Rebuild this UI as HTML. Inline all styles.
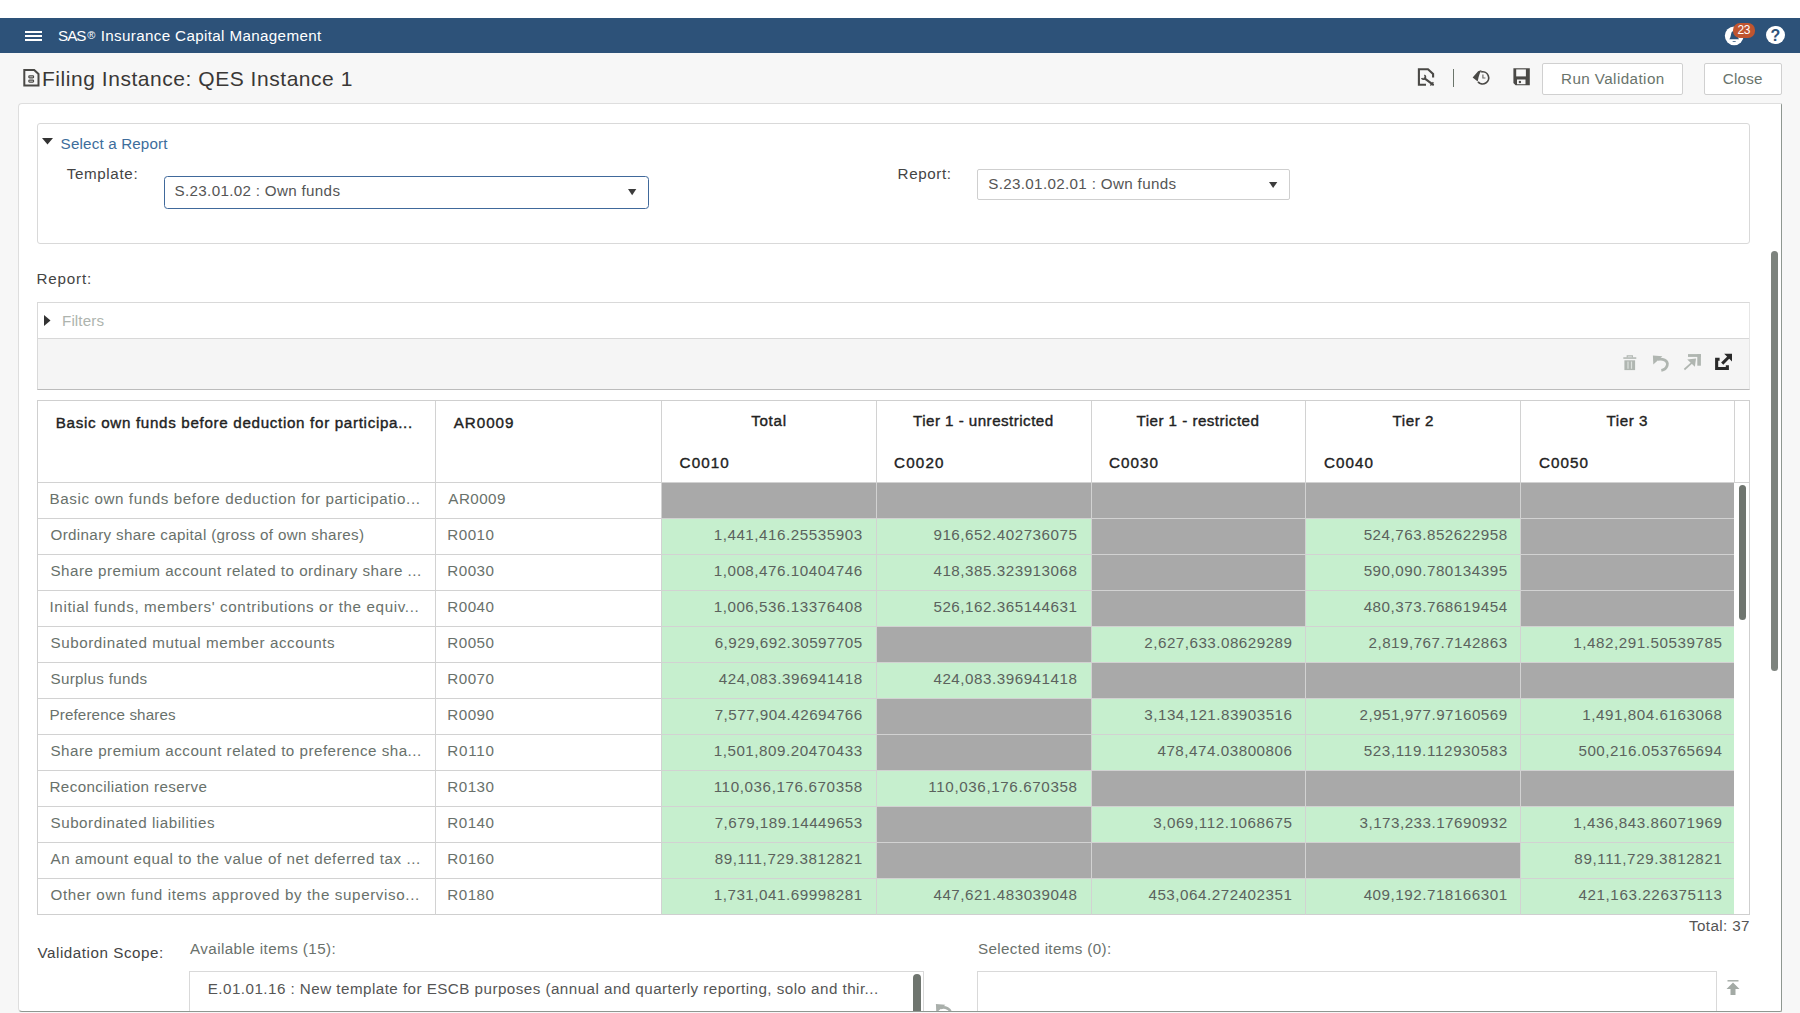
<!DOCTYPE html>
<html lang="en">
<head>
<meta charset="utf-8">
<title>SAS Insurance Capital Management - Filing Instance: QES Instance 1</title>
<style>
*{box-sizing:border-box;margin:0;padding:0}
html,body{width:1800px;height:1013px;overflow:hidden;background:#fff;font-family:"Liberation Sans",sans-serif}
#app{position:relative;width:1800px;height:1013px;overflow:hidden;background:#f7f7f7}
.abs{position:absolute}
.t{position:absolute;white-space:nowrap;line-height:1;display:block}
#topstrip{left:0;top:0;width:1800px;height:18px;background:#fff}
#banner{left:0;top:18px;width:1800px;height:35.4px;background:#2d5279}
#panel{left:18px;top:103px;width:1764px;height:909px;background:#fff;border:1px solid #dedede;border-right-color:#8f9791;border-bottom-color:#8f9791;border-radius:4px 2px 2px 4px}
.box{position:absolute;background:#fff;border:1px solid #d9d9d9}
.btn{position:absolute;background:#fff;border:1px solid #d0d0d0;border-radius:2px}
.gr{position:absolute;background:#a9a9a9}
.gn{position:absolute;background:#c6efce}
.vl{position:absolute;width:1px;background:#d2d2d2}
.hl{position:absolute;height:1px;background:#d2d2d2}
svg{position:absolute;overflow:visible}
</style>
</head>
<body>
<div id="app">
<div id="topstrip" class="abs"></div>
<div id="banner" class="abs"></div>
<!-- hamburger -->
<div class="abs" style="left:25.3px;top:30.6px;width:16.4px;height:2.1px;background:#fff"></div>
<div class="abs" style="left:25.3px;top:35px;width:16.4px;height:2.1px;background:#fff"></div>
<div class="abs" style="left:25.3px;top:39.4px;width:16.4px;height:2.1px;background:#fff"></div>
<!-- bell + badge -->
<svg style="left:1724px;top:26px" width="20" height="20" viewBox="0 0 20 20"><circle cx="10.2" cy="9.8" r="9.4" fill="#fff"/><path d="M5.2 13.2 C7.2 11.5 6.6 7.5 8 5.8 C9 4.6 11.4 4.6 12.4 5.8 C13.8 7.5 13.2 11.5 15.2 13.2 Z" fill="#2d5279"/><path d="M8.2 15.2 Q10.2 17 12.2 15.2 Z" fill="#2d5279"/></svg>
<div class="abs" style="left:1733.2px;top:23px;width:21.8px;height:14.9px;border-radius:7px;background:#bf5530"></div>
<span class="t" style="left:1737.6px;top:23.9px;font-size:12px;color:#fff;letter-spacing:-0.4px">23</span>
<!-- help -->
<div class="abs" style="left:1765.9px;top:25.6px;width:18.8px;height:18.8px;border-radius:50%;background:#fff"></div>
<span class="t" style="left:1770.4px;top:27.5px;font-size:16px;font-weight:700;color:#2d5279">?</span>

<!-- title bar icons -->
<svg style="left:23px;top:69px" width="17" height="18" viewBox="0 0 17 18"><path d="M1.3 1 H11.2 L15.5 5 V16.5 H1.3 Z" fill="none" stroke="#4a4946" stroke-width="2" stroke-linejoin="miter"/><rect x="5.8" y="6.9" width="4.8" height="1.9" rx=".8" fill="none" stroke="#4a4946" stroke-width="1.2"/><rect x="5.8" y="11.2" width="4.8" height="1.9" rx=".8" fill="none" stroke="#4a4946" stroke-width="1.2"/></svg>
<svg style="left:1417px;top:68px" width="18" height="18" viewBox="0 0 18 18"><path d="M9 16.8 H1.9 V1.2 H11 L16.1 6 V9.6" fill="none" stroke="#4a4946" stroke-width="2.1"/><path d="M7.6 10.4 L16 16.6" stroke="#4a4946" stroke-width="2.2" stroke-linecap="round"/><path d="M4.6 10.2 A2.1 2.1 0 1 0 7.3 7.2" fill="none" stroke="#4a4946" stroke-width="1.6"/><path d="M13.4 17.4 L16.4 14.2" stroke="#4a4946" stroke-width="1.4"/></svg>
<div class="abs" style="left:1453.2px;top:69.2px;width:1.3px;height:17.8px;background:#6b756b"></div>
<svg style="left:1472px;top:69px" width="18" height="17" viewBox="0 0 18 17"><path d="M9.2 2.9 A6.1 6.1 0 1 1 6.0 12.9" fill="none" stroke="#4a4946" stroke-width="1.7"/><path d="M9.6 1 L6.1 2.3 L0.65 8.55 L5.7 12.4 L6.5 8.55 L7.65 4.7 Z" fill="#4a4946"/><path d="M10.9 5.6 V9 H13.4" fill="none" stroke="#6f6e6b" stroke-width="1.2"/></svg>
<svg style="left:1513px;top:68px" width="17" height="18" viewBox="0 0 17 18"><path d="M0.4 0.2 H16.8 V17.3 H2.6 L0.4 15 Z" fill="#4a4946"/><rect x="3.2" y="1.4" width="9.7" height="7" fill="#f7f7f7"/><rect x="4" y="11.5" width="8.5" height="4.7" fill="#f7f7f7"/><circle cx="6.9" cy="14" r="1.2" fill="#4a4946"/></svg>
<div class="btn" style="left:1542px;top:63px;width:141px;height:31.5px"></div>
<div class="btn" style="left:1704px;top:63px;width:78px;height:31.5px"></div>

<div id="panel" class="abs"></div>
<!-- outer scrollbar -->
<div class="abs" style="left:1771px;top:251px;width:7px;height:420px;border-radius:4px;background:#7d837e"></div>

<!-- select a report box -->
<div class="box" style="left:37px;top:123px;width:1713px;height:121px;border-radius:3px"></div>
<svg style="left:42px;top:138px" width="12" height="7" viewBox="0 0 12 7"><path d="M0 0 H11 L5.5 6.5 Z" fill="#333"/></svg>
<div class="abs" style="left:164px;top:176px;width:485px;height:32.7px;border:1.5px solid #40699b;border-radius:3.5px;background:#fff"></div>
<svg style="left:628px;top:188.9px" width="9" height="7" viewBox="0 0 9 7"><path d="M0 0 H8.3 L4.15 6.2 Z" fill="#3c3c3c"/></svg>
<div class="abs" style="left:977px;top:169px;width:313px;height:31px;border:1px solid #cfcfcf;border-radius:2px;background:#fff"></div>
<svg style="left:1268.9px;top:181.7px" width="9" height="7" viewBox="0 0 9 7"><path d="M0 0 H8.3 L4.15 6 Z" fill="#3c3c3c"/></svg>

<!-- filters + toolbar -->
<div class="box" style="left:37px;top:302px;width:1713px;height:88px;background:#f5f5f5;border-color:#d9d9d9 #e6e6e6 #bcbcbc #d9d9d9"></div>
<div class="abs" style="left:38px;top:303px;width:1711px;height:36px;background:#fff;border-bottom:1px solid #d8d8d8"></div>
<svg style="left:44px;top:315px" width="7" height="11" viewBox="0 0 7 11"><path d="M0 0 L6.5 5.5 L0 11 Z" fill="#333"/></svg>
<!-- toolbar icons -->
<svg style="left:1620px;top:350px" width="120" height="25" viewBox="0 0 120 25">
<g fill="#b0b6b1" stroke="none">
<path d="M7.2 7.5 V5.9 H12.4 V7.5" fill="none" stroke="#b0b6b1" stroke-width="1.1"/>
<rect x="3.3" y="7.3" width="13" height="1.5"/>
<rect x="4.4" y="10.3" width="10.7" height="9.8"/>
<path d="M8 11.6 V18.8 M11.5 11.6 V18.8" stroke="#dde2de" stroke-width="1.2" fill="none"/>
<path d="M32.9 5.6 L42.4 6.3 L33.3 14.5 Z"/>
<path d="M37.5 9.6 C42 8 48.6 10.5 47.2 15.5 C46.2 18.6 44 19.9 41.3 20.3" fill="none" stroke="#b0b6b1" stroke-width="2.7"/>
<rect x="68" y="4.1" width="12.9" height="2.8"/>
<rect x="77.3" y="4.1" width="3.6" height="11.6"/>
<path d="M76 8.4 L67.2 9.6 L74.9 16.8 Z"/>
<path d="M72 12.6 L64.4 19.5" stroke="#b0b6b1" stroke-width="1.7" fill="none"/>
</g>
<g fill="#2a2a2a">
<path d="M99.6 9.25 H96.65 V18.55 H107.35 V15.2" fill="none" stroke="#2a2a2a" stroke-width="3.1"/>
<path d="M104.2 3.8 H112 V11.4 Z"/>
<path d="M109.6 6.2 L102.2 13.6" stroke="#2a2a2a" stroke-width="3" fill="none"/>
</g>
</svg>

<!-- table -->
<div class="box" style="left:37px;top:400px;width:1713px;height:515px;border-color:#cfcfcf"></div>
<div class="gr" style="left:662px;top:483px;width:214px;height:35px"></div>
<div class="gr" style="left:877px;top:483px;width:214px;height:35px"></div>
<div class="gr" style="left:1092px;top:483px;width:213px;height:35px"></div>
<div class="gr" style="left:1306px;top:483px;width:214px;height:35px"></div>
<div class="gr" style="left:1521px;top:483px;width:213px;height:35px"></div>
<div class="gn" style="left:662px;top:519px;width:214px;height:35px"></div>
<div class="gn" style="left:877px;top:519px;width:214px;height:35px"></div>
<div class="gr" style="left:1092px;top:519px;width:213px;height:35px"></div>
<div class="gn" style="left:1306px;top:519px;width:214px;height:35px"></div>
<div class="gr" style="left:1521px;top:519px;width:213px;height:35px"></div>
<div class="gn" style="left:662px;top:555px;width:214px;height:35px"></div>
<div class="gn" style="left:877px;top:555px;width:214px;height:35px"></div>
<div class="gr" style="left:1092px;top:555px;width:213px;height:35px"></div>
<div class="gn" style="left:1306px;top:555px;width:214px;height:35px"></div>
<div class="gr" style="left:1521px;top:555px;width:213px;height:35px"></div>
<div class="gn" style="left:662px;top:591px;width:214px;height:35px"></div>
<div class="gn" style="left:877px;top:591px;width:214px;height:35px"></div>
<div class="gr" style="left:1092px;top:591px;width:213px;height:35px"></div>
<div class="gn" style="left:1306px;top:591px;width:214px;height:35px"></div>
<div class="gr" style="left:1521px;top:591px;width:213px;height:35px"></div>
<div class="gn" style="left:662px;top:627px;width:214px;height:35px"></div>
<div class="gr" style="left:877px;top:627px;width:214px;height:35px"></div>
<div class="gn" style="left:1092px;top:627px;width:213px;height:35px"></div>
<div class="gn" style="left:1306px;top:627px;width:214px;height:35px"></div>
<div class="gn" style="left:1521px;top:627px;width:213px;height:35px"></div>
<div class="gn" style="left:662px;top:663px;width:214px;height:35px"></div>
<div class="gn" style="left:877px;top:663px;width:214px;height:35px"></div>
<div class="gr" style="left:1092px;top:663px;width:213px;height:35px"></div>
<div class="gr" style="left:1306px;top:663px;width:214px;height:35px"></div>
<div class="gr" style="left:1521px;top:663px;width:213px;height:35px"></div>
<div class="gn" style="left:662px;top:699px;width:214px;height:35px"></div>
<div class="gr" style="left:877px;top:699px;width:214px;height:35px"></div>
<div class="gn" style="left:1092px;top:699px;width:213px;height:35px"></div>
<div class="gn" style="left:1306px;top:699px;width:214px;height:35px"></div>
<div class="gn" style="left:1521px;top:699px;width:213px;height:35px"></div>
<div class="gn" style="left:662px;top:735px;width:214px;height:35px"></div>
<div class="gr" style="left:877px;top:735px;width:214px;height:35px"></div>
<div class="gn" style="left:1092px;top:735px;width:213px;height:35px"></div>
<div class="gn" style="left:1306px;top:735px;width:214px;height:35px"></div>
<div class="gn" style="left:1521px;top:735px;width:213px;height:35px"></div>
<div class="gn" style="left:662px;top:771px;width:214px;height:35px"></div>
<div class="gn" style="left:877px;top:771px;width:214px;height:35px"></div>
<div class="gr" style="left:1092px;top:771px;width:213px;height:35px"></div>
<div class="gr" style="left:1306px;top:771px;width:214px;height:35px"></div>
<div class="gr" style="left:1521px;top:771px;width:213px;height:35px"></div>
<div class="gn" style="left:662px;top:807px;width:214px;height:35px"></div>
<div class="gr" style="left:877px;top:807px;width:214px;height:35px"></div>
<div class="gn" style="left:1092px;top:807px;width:213px;height:35px"></div>
<div class="gn" style="left:1306px;top:807px;width:214px;height:35px"></div>
<div class="gn" style="left:1521px;top:807px;width:213px;height:35px"></div>
<div class="gn" style="left:662px;top:843px;width:214px;height:35px"></div>
<div class="gr" style="left:877px;top:843px;width:214px;height:35px"></div>
<div class="gr" style="left:1092px;top:843px;width:213px;height:35px"></div>
<div class="gr" style="left:1306px;top:843px;width:214px;height:35px"></div>
<div class="gn" style="left:1521px;top:843px;width:213px;height:35px"></div>
<div class="gn" style="left:662px;top:879px;width:214px;height:35px"></div>
<div class="gn" style="left:877px;top:879px;width:214px;height:35px"></div>
<div class="gn" style="left:1092px;top:879px;width:213px;height:35px"></div>
<div class="gn" style="left:1306px;top:879px;width:214px;height:35px"></div>
<div class="gn" style="left:1521px;top:879px;width:213px;height:35px"></div>
<div class="vl" style="left:435px;top:401px;height:514px"></div>
<div class="vl" style="left:661px;top:401px;height:514px"></div>
<div class="vl" style="left:876px;top:401px;height:514px"></div>
<div class="vl" style="left:1091px;top:401px;height:514px"></div>
<div class="vl" style="left:1305px;top:401px;height:514px"></div>
<div class="vl" style="left:1520px;top:401px;height:514px"></div>
<div class="vl" style="left:1734px;top:401px;height:81px"></div>
<div class="hl" style="left:38px;top:482px;width:1711px"></div>
<div class="hl" style="left:38px;top:518px;width:1696px"></div>
<div class="hl" style="left:38px;top:554px;width:1696px"></div>
<div class="hl" style="left:38px;top:590px;width:1696px"></div>
<div class="hl" style="left:38px;top:626px;width:1696px"></div>
<div class="hl" style="left:38px;top:662px;width:1696px"></div>
<div class="hl" style="left:38px;top:698px;width:1696px"></div>
<div class="hl" style="left:38px;top:734px;width:1696px"></div>
<div class="hl" style="left:38px;top:770px;width:1696px"></div>
<div class="hl" style="left:38px;top:806px;width:1696px"></div>
<div class="hl" style="left:38px;top:842px;width:1696px"></div>
<div class="hl" style="left:38px;top:878px;width:1696px"></div>
<!-- inner table scrollbar -->
<div class="abs" style="left:1739px;top:485px;width:7px;height:135px;border-radius:4px;background:#6f756f"></div>

<!-- bottom lists -->
<div class="box" style="left:189px;top:971px;width:735px;height:40px;border-bottom:0"></div>
<div class="abs" style="left:913px;top:974px;width:7.5px;height:37px;border-radius:4px 4px 0 0;background:#6f756f"></div>
<div class="box" style="left:977px;top:971px;width:740px;height:40px;border-bottom:0"></div>
<svg style="left:1726px;top:980px" width="14" height="15" viewBox="0 0 14 15"><path d="M1.5 0.8 H12.5" stroke="#a3aaa5" stroke-width="1.4"/><path d="M7 2.5 L13.5 9 H9.5 V15 H4.5 V9 H0.5 Z" fill="#a3aaa5"/></svg>
<svg style="left:935px;top:1003px;overflow:hidden" width="18" height="8" viewBox="32 4.6 18 8"><path d="M32.9 5.6 L42.4 6.3 L33.3 14.5 Z" fill="#a9afab"/><path d="M37.5 9.6 C42 8 48.6 10.5 47.2 15.5 C46.2 18.6 44 19.9 41.3 20.3" fill="none" stroke="#a9afab" stroke-width="2.7"/></svg>

<span class="t" style="left:58.00px;top:28.01px;font-size:15.2px;color:#fff;letter-spacing:-0.980px;">SAS</span>
<span class="t" style="left:87.30px;top:30.01px;font-size:11px;color:#fff;">®</span>
<span class="t" style="left:100.70px;top:28.01px;font-size:15.2px;color:#fff;letter-spacing:0.350px;">Insurance Capital Management</span>
<span class="t" style="left:42.00px;top:68.00px;font-size:21px;color:#3a3836;letter-spacing:0.541px;">Filing Instance: QES Instance 1</span>
<span class="t" style="left:1561.00px;top:71.01px;font-size:15.2px;color:#6a746c;letter-spacing:0.430px;">Run Validation</span>
<span class="t" style="left:1722.70px;top:71.01px;font-size:15.2px;color:#6a746c;letter-spacing:0.229px;">Close</span>
<span class="t" style="left:60.60px;top:136.01px;font-size:15.2px;color:#3d6d9c;letter-spacing:0.160px;">Select a Report</span>
<span class="t" style="left:66.70px;top:166.01px;font-size:15.2px;color:#444;letter-spacing:0.635px;">Template:</span>
<span class="t" style="left:174.60px;top:183.01px;font-size:15.2px;color:#555;letter-spacing:0.317px;">S.23.01.02 : Own funds</span>
<span class="t" style="left:897.60px;top:166.01px;font-size:15.2px;color:#444;letter-spacing:0.603px;">Report:</span>
<span class="t" style="left:988.20px;top:176.01px;font-size:15.2px;color:#555;letter-spacing:0.336px;">S.23.01.02.01 : Own funds</span>
<span class="t" style="left:36.50px;top:271.01px;font-size:15.2px;color:#444;letter-spacing:0.819px;">Report:</span>
<span class="t" style="left:62.00px;top:313.01px;font-size:15.2px;color:#aeb4ae;letter-spacing:0.108px;">Filters</span>
<span class="t" style="left:55.80px;top:415.01px;font-size:15.2px;color:#222;-webkit-text-stroke:0.38px currentColor;letter-spacing:0.671px;">Basic own funds before deduction for participa...</span>
<span class="t" style="left:453.75px;top:415.01px;font-size:15.2px;color:#222;-webkit-text-stroke:0.38px currentColor;letter-spacing:0.962px;">AR0009</span>
<span class="t" style="left:751.20px;top:413.01px;font-size:15.2px;color:#222;-webkit-text-stroke:0.38px currentColor;letter-spacing:0.699px;">Total</span>
<span class="t" style="left:913.00px;top:413.01px;font-size:15.2px;color:#222;-webkit-text-stroke:0.38px currentColor;letter-spacing:0.452px;">Tier 1 - unrestricted</span>
<span class="t" style="left:1136.50px;top:413.01px;font-size:15.2px;color:#222;-webkit-text-stroke:0.38px currentColor;letter-spacing:0.458px;">Tier 1 - restricted</span>
<span class="t" style="left:1392.50px;top:413.01px;font-size:15.2px;color:#222;-webkit-text-stroke:0.38px currentColor;letter-spacing:0.538px;">Tier 2</span>
<span class="t" style="left:1606.50px;top:413.01px;font-size:15.2px;color:#222;-webkit-text-stroke:0.38px currentColor;letter-spacing:0.538px;">Tier 3</span>
<span class="t" style="left:679.60px;top:455.01px;font-size:15.2px;color:#222;-webkit-text-stroke:0.38px currentColor;letter-spacing:1.073px;">C0010</span>
<span class="t" style="left:894.00px;top:455.01px;font-size:15.2px;color:#222;-webkit-text-stroke:0.38px currentColor;letter-spacing:1.173px;">C0020</span>
<span class="t" style="left:1109.00px;top:455.01px;font-size:15.2px;color:#222;-webkit-text-stroke:0.38px currentColor;letter-spacing:1.048px;">C0030</span>
<span class="t" style="left:1324.00px;top:455.01px;font-size:15.2px;color:#222;-webkit-text-stroke:0.38px currentColor;letter-spacing:1.048px;">C0040</span>
<span class="t" style="left:1539.00px;top:455.01px;font-size:15.2px;color:#222;-webkit-text-stroke:0.38px currentColor;letter-spacing:1.048px;">C0050</span>
<span class="t" style="left:49.50px;top:491.01px;font-size:15.2px;color:#69716b;letter-spacing:0.592px;">Basic own funds before deduction for participatio...</span>
<span class="t" style="left:448.30px;top:491.01px;font-size:15.2px;color:#69716b;letter-spacing:0.452px;">AR0009</span>
<span class="t" style="left:50.50px;top:527.01px;font-size:15.2px;color:#69716b;letter-spacing:0.343px;">Ordinary share capital (gross of own shares)</span>
<span class="t" style="left:447.30px;top:527.01px;font-size:15.2px;color:#69716b;letter-spacing:0.473px;">R0010</span>
<span class="t" style="left:713.65px;top:527.01px;font-size:15.2px;color:#5b625d;letter-spacing:0.543px;">1,441,416.25535903</span>
<span class="t" style="left:933.45px;top:527.01px;font-size:15.2px;color:#5b625d;letter-spacing:0.522px;">916,652.402736075</span>
<span class="t" style="left:1363.65px;top:527.01px;font-size:15.2px;color:#5b625d;letter-spacing:0.522px;">524,763.852622958</span>
<span class="t" style="left:50.50px;top:563.01px;font-size:15.2px;color:#69716b;letter-spacing:0.475px;">Share premium account related to ordinary share ...</span>
<span class="t" style="left:447.30px;top:563.01px;font-size:15.2px;color:#69716b;letter-spacing:0.473px;">R0030</span>
<span class="t" style="left:713.65px;top:563.01px;font-size:15.2px;color:#5b625d;letter-spacing:0.543px;">1,008,476.10404746</span>
<span class="t" style="left:933.45px;top:563.01px;font-size:15.2px;color:#5b625d;letter-spacing:0.522px;">418,385.323913068</span>
<span class="t" style="left:1363.65px;top:563.01px;font-size:15.2px;color:#5b625d;letter-spacing:0.522px;">590,090.780134395</span>
<span class="t" style="left:49.50px;top:599.01px;font-size:15.2px;color:#69716b;letter-spacing:0.621px;">Initial funds, members&#x27; contributions or the equiv...</span>
<span class="t" style="left:447.30px;top:599.01px;font-size:15.2px;color:#69716b;letter-spacing:0.473px;">R0040</span>
<span class="t" style="left:713.65px;top:599.01px;font-size:15.2px;color:#5b625d;letter-spacing:0.543px;">1,006,536.13376408</span>
<span class="t" style="left:933.45px;top:599.01px;font-size:15.2px;color:#5b625d;letter-spacing:0.522px;">526,162.365144631</span>
<span class="t" style="left:1363.65px;top:599.01px;font-size:15.2px;color:#5b625d;letter-spacing:0.522px;">480,373.768619454</span>
<span class="t" style="left:50.50px;top:635.01px;font-size:15.2px;color:#69716b;letter-spacing:0.559px;">Subordinated mutual member accounts</span>
<span class="t" style="left:447.30px;top:635.01px;font-size:15.2px;color:#69716b;letter-spacing:0.473px;">R0050</span>
<span class="t" style="left:714.65px;top:635.01px;font-size:15.2px;color:#5b625d;letter-spacing:0.485px;">6,929,692.30597705</span>
<span class="t" style="left:1144.35px;top:635.01px;font-size:15.2px;color:#5b625d;letter-spacing:0.485px;">2,627,633.08629289</span>
<span class="t" style="left:1368.54px;top:635.01px;font-size:15.2px;color:#5b625d;letter-spacing:0.481px;">2,819,767.7142863</span>
<span class="t" style="left:1573.35px;top:635.01px;font-size:15.2px;color:#5b625d;letter-spacing:0.543px;">1,482,291.50539785</span>
<span class="t" style="left:50.50px;top:671.01px;font-size:15.2px;color:#69716b;letter-spacing:0.311px;">Surplus funds</span>
<span class="t" style="left:447.30px;top:671.01px;font-size:15.2px;color:#69716b;letter-spacing:0.473px;">R0070</span>
<span class="t" style="left:718.75px;top:671.01px;font-size:15.2px;color:#5b625d;letter-spacing:0.522px;">424,083.396941418</span>
<span class="t" style="left:933.45px;top:671.01px;font-size:15.2px;color:#5b625d;letter-spacing:0.522px;">424,083.396941418</span>
<span class="t" style="left:49.50px;top:707.01px;font-size:15.2px;color:#69716b;letter-spacing:0.125px;">Preference shares</span>
<span class="t" style="left:447.30px;top:707.01px;font-size:15.2px;color:#69716b;letter-spacing:0.473px;">R0090</span>
<span class="t" style="left:714.65px;top:707.01px;font-size:15.2px;color:#5b625d;letter-spacing:0.485px;">7,577,904.42694766</span>
<span class="t" style="left:1144.35px;top:707.01px;font-size:15.2px;color:#5b625d;letter-spacing:0.485px;">3,134,121.83903516</span>
<span class="t" style="left:1359.55px;top:707.01px;font-size:15.2px;color:#5b625d;letter-spacing:0.485px;">2,951,977.97160569</span>
<span class="t" style="left:1582.34px;top:707.01px;font-size:15.2px;color:#5b625d;letter-spacing:0.543px;">1,491,804.6163068</span>
<span class="t" style="left:50.50px;top:743.01px;font-size:15.2px;color:#69716b;letter-spacing:0.485px;">Share premium account related to preference sha...</span>
<span class="t" style="left:447.30px;top:743.01px;font-size:15.2px;color:#69716b;letter-spacing:0.755px;">R0110</span>
<span class="t" style="left:713.65px;top:743.01px;font-size:15.2px;color:#5b625d;letter-spacing:0.543px;">1,501,809.20470433</span>
<span class="t" style="left:1157.44px;top:743.01px;font-size:15.2px;color:#5b625d;letter-spacing:0.521px;">478,474.03800806</span>
<span class="t" style="left:1363.65px;top:743.01px;font-size:15.2px;color:#5b625d;letter-spacing:0.663px;">523,119.112930583</span>
<span class="t" style="left:1578.45px;top:743.01px;font-size:15.2px;color:#5b625d;letter-spacing:0.522px;">500,216.053765694</span>
<span class="t" style="left:49.50px;top:779.01px;font-size:15.2px;color:#69716b;letter-spacing:0.383px;">Reconciliation reserve</span>
<span class="t" style="left:447.30px;top:779.01px;font-size:15.2px;color:#69716b;letter-spacing:0.473px;">R0130</span>
<span class="t" style="left:713.65px;top:779.01px;font-size:15.2px;color:#5b625d;letter-spacing:0.610px;">110,036,176.670358</span>
<span class="t" style="left:928.35px;top:779.01px;font-size:15.2px;color:#5b625d;letter-spacing:0.610px;">110,036,176.670358</span>
<span class="t" style="left:50.50px;top:815.01px;font-size:15.2px;color:#69716b;letter-spacing:0.527px;">Subordinated liabilities</span>
<span class="t" style="left:447.30px;top:815.01px;font-size:15.2px;color:#69716b;letter-spacing:0.473px;">R0140</span>
<span class="t" style="left:714.65px;top:815.01px;font-size:15.2px;color:#5b625d;letter-spacing:0.485px;">7,679,189.14449653</span>
<span class="t" style="left:1153.34px;top:815.01px;font-size:15.2px;color:#5b625d;letter-spacing:0.552px;">3,069,112.1068675</span>
<span class="t" style="left:1359.55px;top:815.01px;font-size:15.2px;color:#5b625d;letter-spacing:0.485px;">3,173,233.17690932</span>
<span class="t" style="left:1573.35px;top:815.01px;font-size:15.2px;color:#5b625d;letter-spacing:0.543px;">1,436,843.86071969</span>
<span class="t" style="left:50.50px;top:851.01px;font-size:15.2px;color:#69716b;letter-spacing:0.545px;">An amount equal to the value of net deferred tax ...</span>
<span class="t" style="left:447.30px;top:851.01px;font-size:15.2px;color:#69716b;letter-spacing:0.473px;">R0160</span>
<span class="t" style="left:714.65px;top:851.01px;font-size:15.2px;color:#5b625d;letter-spacing:0.617px;">89,111,729.3812821</span>
<span class="t" style="left:1574.35px;top:851.01px;font-size:15.2px;color:#5b625d;letter-spacing:0.617px;">89,111,729.3812821</span>
<span class="t" style="left:50.50px;top:887.01px;font-size:15.2px;color:#69716b;letter-spacing:0.611px;">Other own fund items approved by the superviso...</span>
<span class="t" style="left:447.30px;top:887.01px;font-size:15.2px;color:#69716b;letter-spacing:0.473px;">R0180</span>
<span class="t" style="left:713.65px;top:887.01px;font-size:15.2px;color:#5b625d;letter-spacing:0.543px;">1,731,041.69998281</span>
<span class="t" style="left:933.45px;top:887.01px;font-size:15.2px;color:#5b625d;letter-spacing:0.522px;">447,621.483039048</span>
<span class="t" style="left:1148.45px;top:887.01px;font-size:15.2px;color:#5b625d;letter-spacing:0.522px;">453,064.272402351</span>
<span class="t" style="left:1363.65px;top:887.01px;font-size:15.2px;color:#5b625d;letter-spacing:0.522px;">409,192.718166301</span>
<span class="t" style="left:1578.45px;top:887.01px;font-size:15.2px;color:#5b625d;letter-spacing:0.593px;">421,163.226375113</span>
<span class="t" style="left:1689.00px;top:918.01px;font-size:15.2px;color:#555;letter-spacing:0.379px;">Total: 37</span>
<span class="t" style="left:37.50px;top:945.01px;font-size:15.2px;color:#444;letter-spacing:0.540px;">Validation Scope:</span>
<span class="t" style="left:190.00px;top:941.01px;font-size:15.2px;color:#6a716c;letter-spacing:0.420px;">Available items (15):</span>
<span class="t" style="left:207.75px;top:981.01px;font-size:15.2px;color:#555;letter-spacing:0.460px;">E.01.01.16 : New template for ESCB purposes (annual and quarterly reporting, solo and thir...</span>
<span class="t" style="left:978.00px;top:941.01px;font-size:15.2px;color:#6a716c;letter-spacing:0.367px;">Selected items (0):</span>
</div>
</body>
</html>
